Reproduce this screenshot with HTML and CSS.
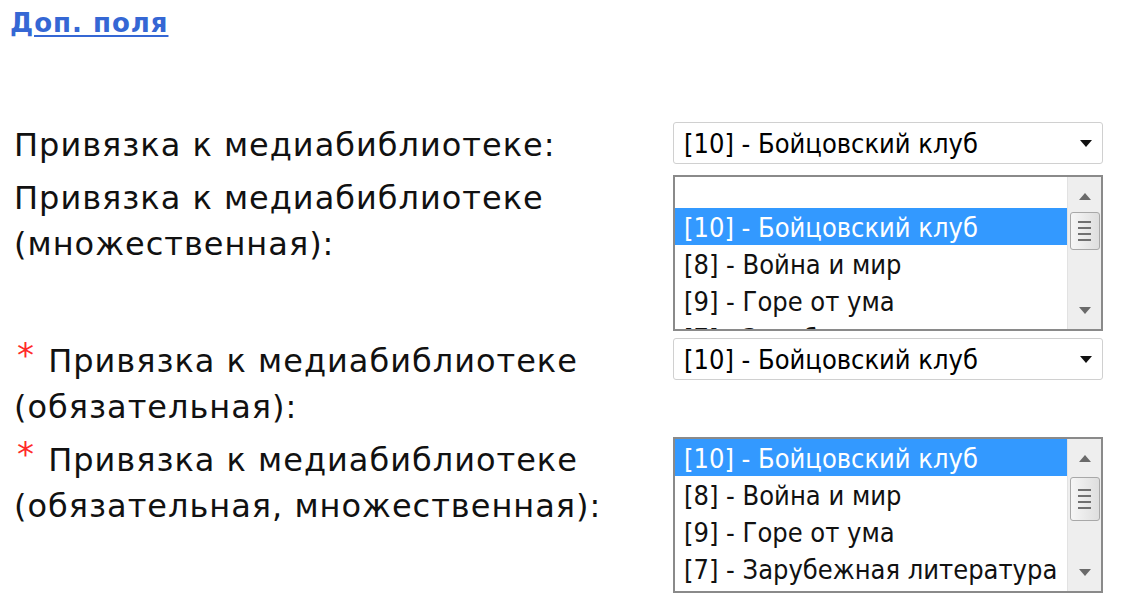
FILE: index.html
```html
<!DOCTYPE html>
<html lang="ru">
<head>
<meta charset="utf-8">
<title>Доп. поля</title>
<link rel="stylesheet" href="styles.css">
</head>
<body>
<div class="page">
  <a class="more" href="#">Доп. поля</a>
  <div class="form">
    <div class="label">Привязка к медиабиблиотеке:</div>
    <div class="ctrl">
      <div class="select">
        <span class="value">[10] - Бойцовский клуб</span>
        <svg class="arrow" width="12" height="7" viewBox="0 0 12 7"><path d="M0 0H12L6 7Z" fill="#111"/></svg>
      </div>
    </div>

    <div class="label">Привязка к медиабиблиотеке<br>(множественная):</div>
    <div class="ctrl">
      <div class="listbox">
        <div class="options">
          <div class="list list-scrolled">
            <div class="opt"></div>
            <div class="opt sel">[10] - Бойцовский клуб</div>
            <div class="opt">[8] - Война и мир</div>
            <div class="opt">[9] - Горе от ума</div>
            <div class="opt">[7] - Зарубежная литература</div>
          </div>
        </div>
        <div class="scrollbar">
          <svg class="sb-arrow" width="12" height="7" viewBox="0 0 12 7"><path d="M0 7H12L6 0Z" fill="#6a6a6a"/></svg>
          <div class="track">
            <div class="thumb thumb-a"><span></span><span></span><span></span><span></span></div>
          </div>
          <svg class="sb-arrow" width="12" height="7" viewBox="0 0 12 7"><path d="M0 0H12L6 7Z" fill="#6a6a6a"/></svg>
        </div>
      </div>
    </div>

    <div class="label"><span class="req">*</span> Привязка к медиабиблиотеке<br>(обязательная):</div>
    <div class="ctrl">
      <div class="select">
        <span class="value">[10] - Бойцовский клуб</span>
        <svg class="arrow" width="12" height="7" viewBox="0 0 12 7"><path d="M0 0H12L6 7Z" fill="#111"/></svg>
      </div>
    </div>

    <div class="label"><span class="req">*</span> Привязка к медиабиблиотеке<br>(обязательная, множественная):</div>
    <div class="ctrl">
      <div class="listbox">
        <div class="options">
          <div class="list">
            <div class="opt sel">[10] - Бойцовский клуб</div>
            <div class="opt">[8] - Война и мир</div>
            <div class="opt">[9] - Горе от ума</div>
            <div class="opt">[7] - Зарубежная литература</div>
          </div>
        </div>
        <div class="scrollbar">
          <svg class="sb-arrow" width="12" height="7" viewBox="0 0 12 7"><path d="M0 7H12L6 0Z" fill="#6a6a6a"/></svg>
          <div class="track">
            <div class="thumb thumb-b"><span></span><span></span><span></span><span></span></div>
          </div>
          <svg class="sb-arrow" width="12" height="7" viewBox="0 0 12 7"><path d="M0 0H12L6 7Z" fill="#6a6a6a"/></svg>
        </div>
      </div>
    </div>
  </div>
</div>
</body>
</html>
```
FILE: styles.css
```css
html, body {
  margin: 0;
  padding: 0;
  background: #fff;
}
body {
  font-family: Tahoma, "DejaVu Sans", sans-serif;
  color: #000;
  width: 1128px;
  height: 609px;
  overflow: hidden;
}
.page {
  padding: 8px 0 0 10px;
}
.more {
  display: inline-block;
  font-size: 26px;
  font-weight: bold;
  letter-spacing: 1px;
  line-height: 30px;
  color: #3567d4;
  text-decoration: underline;
  text-underline-offset: 3px;
}
.form {
  display: grid;
  grid-template-columns: 659px 430px;
  row-gap: 7px;
  margin-top: 84px;
  padding-left: 4px;
}
.label {
  font-size: 32px;
  letter-spacing: 1px;
  line-height: 46px;
  color: #111;
  white-space: nowrap;
}
.req {
  color: #ff2a2a;
  font-size: 34px;
  line-height: 0;
  letter-spacing: 0;
  vertical-align: 5px;
  margin-left: 3px;
  margin-right: 3px;
}
.select {
  box-sizing: border-box;
  height: 42px;
  border: 1px solid #d0d0d0;
  border-radius: 3px;
  display: flex;
  align-items: center;
  justify-content: space-between;
  padding: 0 10px 0 10px;
  font-family: Tahoma, "DejaVu Sans Condensed", sans-serif;
  font-size: 27px;
  background: #fff;
}
.select .value {
  white-space: nowrap;
}
.listbox {
  box-sizing: border-box;
  height: 156px;
  border: 2px solid #8a8a8a;
  display: flex;
  background: #fff;
  font-family: Tahoma, "DejaVu Sans Condensed", sans-serif;
  font-size: 27px;
}
.options {
  flex: 1;
  overflow: hidden;
}
.list-scrolled {
  margin-top: -6px;
}
.opt {
  height: 37px;
  line-height: 39px;
  padding-left: 9px;
  white-space: nowrap;
  color: #111;
}
.opt.sel {
  background: #3399ff;
  color: #fff;
}
.scrollbar {
  width: 34px;
  background: #eeeeee;
  border-left: 1px solid #e2e2e2;
  display: flex;
  flex-direction: column;
  align-items: center;
  justify-content: space-between;
  padding: 16px 0 15px;
  box-sizing: border-box;
}
.sb-arrow {
  flex: none;
}
.track {
  flex: 1;
  width: 100%;
  display: flex;
  flex-direction: column;
  align-items: center;
}
.thumb {
  box-sizing: border-box;
  width: 30px;
  border: 1px solid #a8a8a8;
  border-radius: 3px;
  background: linear-gradient(to right, #f6f6f6, #dedede);
  display: flex;
  flex-direction: column;
  align-items: center;
  justify-content: center;
  gap: 4px;
}
.thumb span {
  width: 13px;
  height: 2px;
  background: #707070;
}
.thumb-a {
  height: 38px;
  margin-top: 12px;
}
.thumb-b {
  height: 44px;
  margin-top: 15px;
}
```
